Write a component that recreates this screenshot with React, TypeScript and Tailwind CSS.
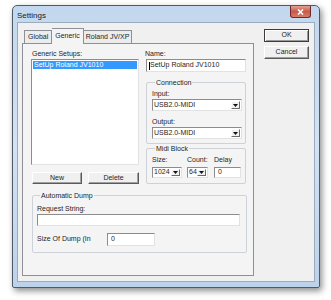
import type { ReactNode } from "react";

function Btn({ label, className }: { label: string; className: string }) {
  return (
    <div
      className={`flex items-center justify-center h-[12px] bg-[#f0f0f0] border border-t-white border-l-white border-r-[#5a5a5a] border-b-[#5a5a5a] shadow-[inset_-1px_-1px_0_#a0a0a0] ${className}`}
    >
      {label}
    </div>
  );
}

function Field({ value, className, caret }: { value: string; className: string; caret?: boolean }) {
  return (
    <div
      className={`flex items-center bg-white border border-t-[#8c8c8c] border-l-[#8c8c8c] border-r-[#e2e2e2] border-b-[#e2e2e2] pl-[3px] ${className}`}
    >
      {caret && <span className="w-px h-[8px] bg-black -ml-[1px]" />}
      <span>{value}</span>
    </div>
  );
}

function Combo({ value, className }: { value: string; className: string }) {
  return (
    <div
      className={`flex items-stretch bg-white border border-t-[#8c8c8c] border-l-[#8c8c8c] border-r-[#e2e2e2] border-b-[#e2e2e2] ${className}`}
    >
      <span className="flex-1 flex items-center pl-[1px]">{value}</span>
      <span className="w-[9px] my-px mr-px flex items-center justify-center bg-[#f0f0f0] border border-t-white border-l-white border-r-[#6a6a6a] border-b-[#6a6a6a]">
        <svg width="5" height="3" viewBox="0 0 5 3">
          <path d="M0 0h5L2.5 3z" fill="#111" />
        </svg>
      </span>
    </div>
  );
}

function Group({ title, className, children }: { title: string; className: string; children: ReactNode }) {
  return (
    <fieldset className={`border border-[#cdd2d8] rounded-[2px] ${className}`}>
      <legend className="ml-[3px] px-[1px] leading-[9px]">{title}</legend>
      {children}
    </fieldset>
  );
}

export default function App() {
  return (
    <div className="w-[331px] h-[300px] bg-white pl-[12px] pt-[5px] whitespace-nowrap font-['Liberation_Sans',Arial,sans-serif] text-[7px] text-[#1e1e1e]">
      <div className="w-[308px] h-[283px] flex flex-col border border-[#505a66] rounded-t-[5px] rounded-b-[2px] bg-gradient-to-b from-[#c3d7ee] via-[#d3e2f4] to-[#bcd2ea] shadow-[2px_3px_6px_rgba(0,0,0,0.45)]">
        {/* title bar */}
        <div className="h-[16px] flex justify-between pl-[4px] pr-[8px]">
          <span className="pt-[4px] text-[8px] text-[#1a1a1a]">Settings</span>
          <div className="w-[21px] h-[12px] rounded-b-[3px] border border-t-0 border-[#6b2a25] bg-gradient-to-b from-[#e3a194] via-[#c9584a] to-[#d67b68] flex items-center justify-center">
            <svg width="7" height="6" viewBox="0 0 7 6">
              <path d="M1 0.5l5 5M6 0.5l-5 5" stroke="#fff" strokeWidth="1.6" />
            </svg>
          </div>
        </div>

        {/* client */}
        <div className="mx-[4px] h-[260px] bg-[#f0f0f0] border border-[#9aabbf] flex pl-[4px] pt-[4px]">
          {/* tab control */}
          <div className="w-[232px] flex flex-col">
            <div className="h-[16px] flex items-end pl-[2px]">
              <div className="h-[13px] px-[3px] border border-b-0 border-[#8e9097] bg-[#ececec] flex items-center">
                Global
              </div>
              <div className="h-[16px] px-[3px] -mb-px border border-b-0 border-l-0 border-[#8e9097] bg-[#f4f4f4] flex items-center relative z-10">
                Generic
              </div>
              <div className="h-[13px] px-[2px] border border-b-0 border-l-0 border-[#8e9097] bg-[#ececec] flex items-center">
                Roland JV/XP
              </div>
            </div>
            <div className="h-[233px] border border-[#8e9097] bg-[#f4f4f4] pl-[8px] pt-[5px] flex flex-col">
              <div className="flex">
                {/* left column */}
                <div className="w-[108px] flex flex-col">
                  <div className="h-[9px] leading-[9px] pl-px">Generic Setups:</div>
                  <div className="mt-px h-[106px] bg-white border border-t-[#8c8c8c] border-l-[#8c8c8c] border-r-[#e2e2e2] border-b-[#e2e2e2] p-px">
                    <div className="h-[8px] leading-[8px] bg-[#3399ff] text-white pl-[1px]">SetUp Roland JV1010</div>
                  </div>
                  <div className="mt-[7px] flex gap-[6px] pl-px">
                    <Btn label="New" className="w-[50px]" />
                    <Btn label="Delete" className="w-[51px]" />
                  </div>
                </div>

                {/* right column */}
                <div className="ml-[7px] w-[100px] flex flex-col">
                  <div className="h-[9px] leading-[9px] -ml-px">Name:</div>
                  <Field value="SetUp Roland JV1010" className="mt-px h-[13px]" caret />
                  <Group title="Connection" className="mt-[6px] pl-[5px] pb-[4px]">
                    <div className="mt-[2px] h-[9px] leading-[9px]">Input:</div>
                    <Combo value="USB2.0-MIDI" className="mt-px h-[12px] w-[90px]" />
                    <div className="mt-[6px] h-[9px] leading-[9px]">Output:</div>
                    <Combo value="USB2.0-MIDI" className="mt-px h-[12px] w-[90px]" />
                  </Group>
                  <Group title="Midi Block" className="pl-[5px] pb-[5px]">
                    <div className="mt-[2px] flex">
                      <div className="w-[30px] flex flex-col">
                        <div className="h-[9px] leading-[9px]">Size:</div>
                        <Combo value="1024" className="mt-[3px] h-[11px]" />
                      </div>
                      <div className="ml-[5px] w-[21px] flex flex-col">
                        <div className="h-[9px] leading-[9px]">Count:</div>
                        <Combo value="64" className="mt-[3px] h-[11px]" />
                      </div>
                      <div className="ml-[6px] w-[27px] flex flex-col">
                        <div className="h-[9px] leading-[9px]">Delay</div>
                        <Field value="0" className="mt-[3px] h-[11px]" />
                      </div>
                    </div>
                  </Group>
                </div>
              </div>

              <Group title="Automatic Dump" className="mt-[7px] ml-px w-[215px] pl-[4px] pb-[6px]">
                <div className="mt-[4px] h-[9px] leading-[9px]">Request String:</div>
                <Field value="" className="mt-px h-[12px] w-[203px]" />
                <div className="mt-[7px] flex items-center">
                  <div className="w-[70px]">Size Of Dump (In</div>
                  <Field value="0" className="h-[13px] w-[48px]" />
                </div>
              </Group>
            </div>
          </div>

          {/* dialog buttons */}
          <div className="ml-[10px] mt-[2px] flex flex-col gap-[4px]">
            <div className="w-[45px] h-[13px] flex items-center justify-center bg-[#f0f0f0] border border-[#3c3c3c] shadow-[inset_1px_1px_0_#fff,inset_-1px_-1px_0_#9a9a9a]">
              OK
            </div>
            <div className="w-[45px] h-[13px] flex items-center justify-center bg-[#f0f0f0] border border-t-white border-l-white border-r-[#5a5a5a] border-b-[#5a5a5a] shadow-[inset_-1px_-1px_0_#a0a0a0]">
              Cancel
            </div>
          </div>
        </div>
      </div>
    </div>
  );
}
